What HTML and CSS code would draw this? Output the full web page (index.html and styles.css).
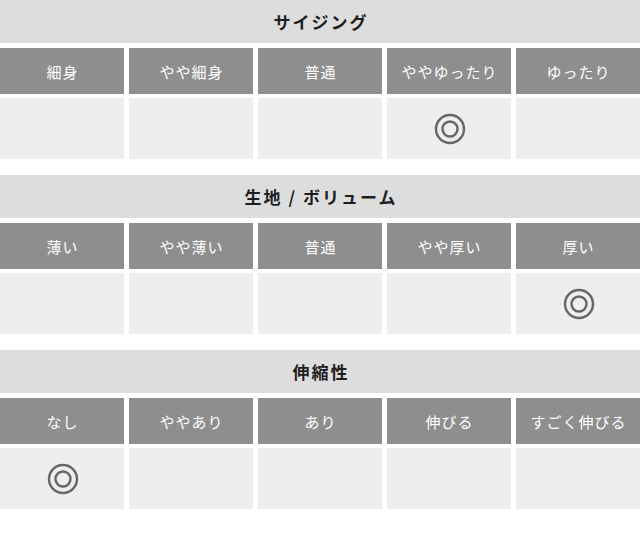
FILE: index.html
```html
<!DOCTYPE html>
<html lang="ja">
<head>
<meta charset="utf-8">
<title>サイズ表</title>
<link rel="stylesheet" href="styles.css">
</head>
<body>
<div class="page">
  <section class="block">
    <h2 class="band">サイジング</h2>
    <div class="row">
      <div class="head">細身</div>
      <div class="head">やや細身</div>
      <div class="head">普通</div>
      <div class="head">ややゆったり</div>
      <div class="head">ゆったり</div>
    </div>
    <div class="row">
      <div class="cell"></div>
      <div class="cell"></div>
      <div class="cell"></div>
      <div class="cell"><svg class="mark" viewBox="0 0 32 32" width="32" height="32"><circle cx="16" cy="16" r="14" /><circle cx="16" cy="16" r="7.5" /></svg></div>
      <div class="cell"></div>
    </div>
  </section>
  <section class="block">
    <h2 class="band">生地 / ボリューム</h2>
    <div class="row">
      <div class="head">薄い</div>
      <div class="head">やや薄い</div>
      <div class="head">普通</div>
      <div class="head">やや厚い</div>
      <div class="head">厚い</div>
    </div>
    <div class="row">
      <div class="cell"></div>
      <div class="cell"></div>
      <div class="cell"></div>
      <div class="cell"></div>
      <div class="cell"><svg class="mark" viewBox="0 0 32 32" width="32" height="32"><circle cx="16" cy="16" r="14" /><circle cx="16" cy="16" r="7.5" /></svg></div>
    </div>
  </section>
  <section class="block">
    <h2 class="band">伸縮性</h2>
    <div class="row">
      <div class="head">なし</div>
      <div class="head">ややあり</div>
      <div class="head">あり</div>
      <div class="head">伸びる</div>
      <div class="head">すごく伸びる</div>
    </div>
    <div class="row">
      <div class="cell"><svg class="mark" viewBox="0 0 32 32" width="32" height="32"><circle cx="16" cy="16" r="14" /><circle cx="16" cy="16" r="7.5" /></svg></div>
      <div class="cell"></div>
      <div class="cell"></div>
      <div class="cell"></div>
      <div class="cell"></div>
    </div>
  </section>
</div>
</body>
</html>
```

FILE: styles.css
```css
html, body {
  margin: 0;
  padding: 0;
  background: #ffffff;
}
body {
  font-family: "Noto Sans CJK JP", "Noto Sans", sans-serif;
}
.page {
  width: 640px;
}
.block {
  display: flex;
  flex-direction: column;
  margin-bottom: 16px;
}
.band {
  margin: 0;
  height: 43px;
  background: #dddddd;
  color: #1e1e1e;
  font-size: 17px;
  font-weight: bold;
  letter-spacing: 2px;
  padding-left: 2px;
  display: flex;
  align-items: center;
  justify-content: center;
}
.row {
  display: grid;
  grid-template-columns: repeat(5, 124px);
  column-gap: 5px;
}
.band + .row {
  margin-top: 5px;
}
.row + .row {
  margin-top: 4px;
}
.head {
  height: 46px;
  background: #8e8e8e;
  color: #ffffff;
  font-size: 15px;
  letter-spacing: 1px;
  padding-left: 1px;
  display: flex;
  align-items: center;
  justify-content: center;
}
.cell {
  height: 61px;
  background: #eeeeee;
  display: flex;
  align-items: center;
  justify-content: center;
}
.mark {
  display: block;
  fill: none;
  stroke: #666666;
  stroke-width: 2.4;
  margin-left: 1px;
}
```
